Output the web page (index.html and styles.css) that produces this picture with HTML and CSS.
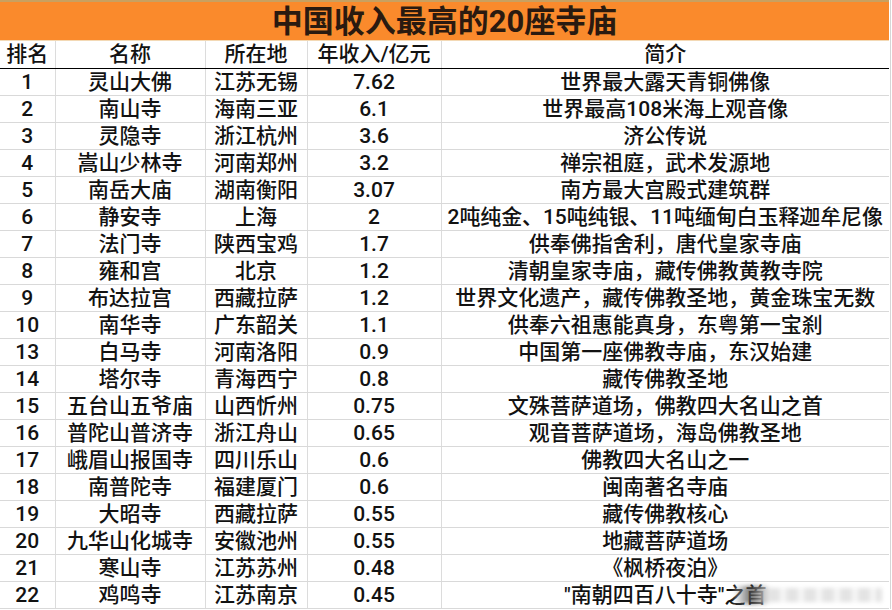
FILE: index.html
```html
<!DOCTYPE html>
<html lang="zh">
<head>
<meta charset="utf-8">
<title>中国收入最高的20座寺庙</title>
<link rel="stylesheet" href="styles.css">
</head>
<body>
<div class="sheet">
  <div class="title">中国收入最高的20座寺庙</div>
  <table class="grid">
    <colgroup>
      <col class="c-rank"><col class="c-name"><col class="c-loc"><col class="c-inc"><col class="c-desc">
    </colgroup>
    <thead>
      <tr><th>排名</th><th>名称</th><th>所在地</th><th>年收入/亿元</th><th>简介</th></tr>
    </thead>
    <tbody>
      <tr><td>1</td><td>灵山大佛</td><td>江苏无锡</td><td>7.62</td><td>世界最大露天青铜佛像</td></tr>
      <tr><td>2</td><td>南山寺</td><td>海南三亚</td><td>6.1</td><td>世界最高108米海上观音像</td></tr>
      <tr><td>3</td><td>灵隐寺</td><td>浙江杭州</td><td>3.6</td><td>济公传说</td></tr>
      <tr><td>4</td><td>嵩山少林寺</td><td>河南郑州</td><td>3.2</td><td>禅宗祖庭，武术发源地</td></tr>
      <tr><td>5</td><td>南岳大庙</td><td>湖南衡阳</td><td>3.07</td><td>南方最大宫殿式建筑群</td></tr>
      <tr><td>6</td><td>静安寺</td><td>上海</td><td>2</td><td class="tight">2吨纯金、15吨纯银、11吨缅甸白玉释迦牟尼像</td></tr>
      <tr><td>7</td><td>法门寺</td><td>陕西宝鸡</td><td>1.7</td><td>供奉佛指舍利，唐代皇家寺庙</td></tr>
      <tr><td>8</td><td>雍和宫</td><td>北京</td><td>1.2</td><td>清朝皇家寺庙，藏传佛教黄教寺院</td></tr>
      <tr><td>9</td><td>布达拉宫</td><td>西藏拉萨</td><td>1.2</td><td>世界文化遗产，藏传佛教圣地，黄金珠宝无数</td></tr>
      <tr><td>10</td><td>南华寺</td><td>广东韶关</td><td>1.1</td><td>供奉六祖惠能真身，东粤第一宝刹</td></tr>
      <tr><td>13</td><td>白马寺</td><td>河南洛阳</td><td>0.9</td><td>中国第一座佛教寺庙，东汉始建</td></tr>
      <tr><td>14</td><td>塔尔寺</td><td>青海西宁</td><td>0.8</td><td>藏传佛教圣地</td></tr>
      <tr><td>15</td><td>五台山五爷庙</td><td>山西忻州</td><td>0.75</td><td>文殊菩萨道场，佛教四大名山之首</td></tr>
      <tr><td>16</td><td>普陀山普济寺</td><td>浙江舟山</td><td>0.65</td><td>观音菩萨道场，海岛佛教圣地</td></tr>
      <tr><td>17</td><td>峨眉山报国寺</td><td>四川乐山</td><td>0.6</td><td>佛教四大名山之一</td></tr>
      <tr><td>18</td><td>南普陀寺</td><td>福建厦门</td><td>0.6</td><td>闽南著名寺庙</td></tr>
      <tr><td>19</td><td>大昭寺</td><td>西藏拉萨</td><td>0.55</td><td>藏传佛教核心</td></tr>
      <tr><td>20</td><td>九华山化城寺</td><td>安徽池州</td><td>0.55</td><td>地藏菩萨道场</td></tr>
      <tr><td>21</td><td>寒山寺</td><td>江苏苏州</td><td>0.48</td><td>《枫桥夜泊》</td></tr>
      <tr><td>22</td><td>鸡鸣寺</td><td>江苏南京</td><td>0.45</td><td>"南朝四百八十寺"之首</td></tr>
    </tbody>
  </table>
  <div class="watermark" aria-hidden="true">
    <div class="wm-dark"></div>
    <div class="wm-light"></div>
  </div>
</div>
</body>
</html>
```

FILE: styles.css
```css
html, body {
  margin: 0;
  padding: 0;
  background: #ffffff;
}
body {
  width: 892px;
  height: 610px;
  overflow: hidden;
  font-family: Roboto, "Noto Sans CJK SC", sans-serif;
  color: #121212;
}
.sheet {
  position: relative;
  width: 890px;
  border-right: 1px solid #d6d6d6;
}
.title {
  box-sizing: border-box;
  height: 41px;
  width: 889px;
  background: #fa8a2c;
  border-top: 2px solid #c9a060;
  border-bottom: 1px solid #f3d9b5;
  padding-top: 1px;
  text-align: center;
  font-size: 31px;
  font-weight: 700;
  line-height: 38px;
  color: #2a1a10;
}
.grid {
  border-collapse: collapse;
  table-layout: fixed;
  width: 889px;
}
.c-rank { width: 55px; }
.c-name { width: 150px; }
.c-loc { width: 102px; }
.c-inc { width: 134px; }
.c-desc { width: 448px; }
.grid th, .grid td {
  box-sizing: border-box;
  padding: 0;
  text-align: center;
  white-space: nowrap;
  overflow: visible;
  font-size: 21px;
  font-weight: 500;
  border-left: 1px solid #dcdcdc;
  border-bottom: 1px solid #d9d9d9;
}
.grid th:first-child, .grid td:first-child {
  border-left: none;
}
.grid th {
  height: 27px;
  line-height: 26px;
  border-bottom: 1px solid #000;
}
.grid td {
  height: 27px;
  line-height: 26px;
}
.grid td.tight {
  letter-spacing: -0.1px;
}
.watermark {
  position: absolute;
  left: 734px;
  top: 585px;
  width: 148px;
  height: 20px;
  display: flex;
  align-items: center;
  filter: blur(2px);
  pointer-events: none;
}
.wm-dark {
  width: 34px;
  height: 18px;
  background: linear-gradient(90deg, rgba(255,255,255,0.3), rgba(70,70,70,0.75) 50%, rgba(220,220,220,0.85));
}
.wm-light {
  flex: 1;
  height: 14px;
  background: repeating-linear-gradient(90deg, rgba(226,226,226,0.95) 0 12px, rgba(245,245,245,0.95) 12px 18px);
}
```
